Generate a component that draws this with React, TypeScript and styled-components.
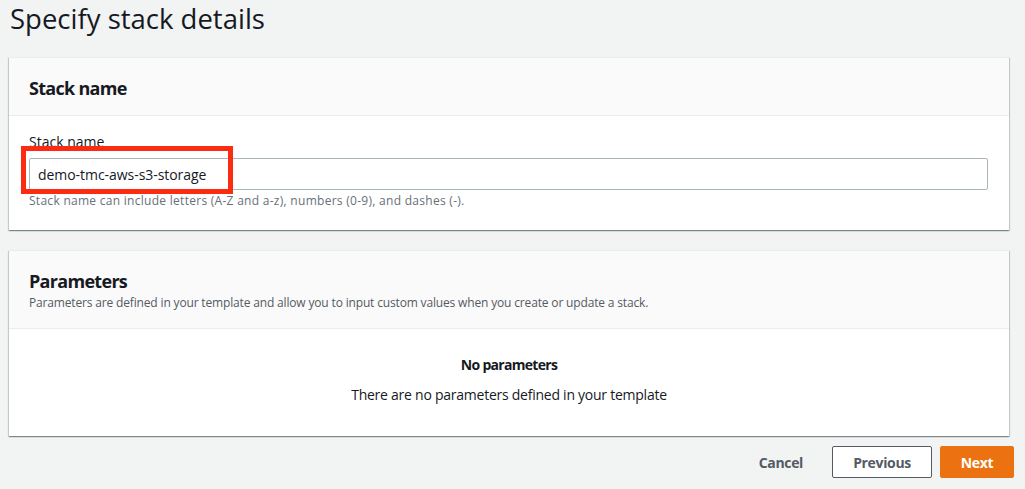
import React from "react";
import styled, { createGlobalStyle } from "styled-components";

const FONT = `"Open Sans", "Noto Sans", Arial, sans-serif`;

const Global = createGlobalStyle`
  html, body { margin: 0; padding: 0; background: #f2f3f3; }
  body { font-family: ${FONT}; color: #16191f; -webkit-font-smoothing: antialiased; }
  * { box-sizing: border-box; }
`;

const Page = styled.div`
  width: 1025px;
  height: 489px;
  padding: 0 0 0 9px;
  overflow: hidden;
`;

const Title = styled.h1`
  margin: 0;
  height: 57px;
  padding: 0 0 0 1px;
  font-size: 27.5px;
  line-height: 37px;
  font-weight: 400;
  color: #16191f;
`;

const Stack = styled.div`
  width: 1000px;
  display: flex;
  flex-direction: column;
  gap: 20px;
`;

const Card = styled.section`
  background: #fff;
  border-top: 1px solid #eaeded;
  box-shadow: 0 1px 1px 0 rgba(0, 28, 36, 0.3), 1px 1px 1px 0 rgba(0, 28, 36, 0.15),
    -1px 1px 1px 0 rgba(0, 28, 36, 0.15);
`;

const CardHeader = styled.header`
  background: #fafafa;
  border-bottom: 1px solid #eaeded;
  padding: 19px 20px 16px;
`;

const CardTitle = styled.h2`
  margin: 0;
  font-size: 18px;
  line-height: 22px;
  font-weight: 700;
  letter-spacing: -0.7px;
  color: #16191f;
`;

const CardDesc = styled.p`
  margin: 2px 0 0;
  font-size: 12px;
  line-height: 18px;
  letter-spacing: -0.16px;
  color: #545b64;
`;

const CardBody = styled.div<{ $center?: boolean }>`
  padding: ${(p) => (p.$center ? "26px 20px 31px" : "16px 20px 20px")};
  display: flex;
  flex-direction: column;
  align-items: ${(p) => (p.$center ? "center" : "stretch")};
  gap: ${(p) => (p.$center ? "10px" : "0")};
`;

const Field = styled.div`
  position: relative;
  display: flex;
  flex-direction: column;
`;

const Label = styled.label`
  font-size: 14px;
  line-height: 20px;
  color: #16191f;
  margin-bottom: 6px;
`;

const Input = styled.input`
  width: 959px;
  height: 32px;
  border: 1px solid #aab7b8;
  border-radius: 2px;
  padding: 0 8px;
  font-family: ${FONT};
  font-size: 14px;
  letter-spacing: -0.05px;
  color: #16191f;
  background: #fff;
  outline: none;
`;

const Help = styled.div`
  margin-top: 2px;
  font-size: 12px;
  line-height: 18px;
  letter-spacing: 0.28px;
  color: #687078;
`;

const Highlight = styled.div`
  position: absolute;
  left: -8px;
  top: 14px;
  width: 212px;
  height: 48px;
  border: 5px solid #fb2c12;
  pointer-events: none;
`;

const EmptyTitle = styled.div`
  font-size: 14px;
  line-height: 20px;
  font-weight: 700;
  letter-spacing: -0.7px;
  color: #16191f;
`;

const EmptyText = styled.div`
  font-size: 14px;
  line-height: 20px;
  letter-spacing: -0.25px;
  color: #16191f;
`;

const Actions = styled.div`
  width: 1005px;
  margin-top: 10px;
  display: flex;
  justify-content: flex-end;
  align-items: center;
  gap: 8px;
`;

const Button = styled.button<{ $variant: "link" | "normal" | "primary" }>`
  height: 32px;
  padding: 0 ${(p) => (p.$variant === "link" ? "20px" : "0")};
  width: ${(p) => (p.$variant === "normal" ? "100px" : p.$variant === "primary" ? "74px" : "auto")};
  flex: none;
  font-family: ${FONT};
  font-size: 14px;
  font-weight: 700;
  letter-spacing: -0.35px;
  border-radius: 2px;
  cursor: pointer;
  border: 1px solid
    ${(p) => (p.$variant === "normal" ? "#545b64" : p.$variant === "primary" ? "#ec7211" : "transparent")};
  background: ${(p) => (p.$variant === "primary" ? "#ec7211" : p.$variant === "normal" ? "#fff" : "transparent")};
  color: ${(p) => (p.$variant === "primary" ? "#fff" : "#545b64")};
`;

export default function App() {
  return (
    <>
      <Global />
      <Page>
        <Title>Specify stack details</Title>
        <Stack>
          <Card>
            <CardHeader>
              <CardTitle>Stack name</CardTitle>
            </CardHeader>
            <CardBody>
              <Field>
                <Label>Stack name</Label>
                <Input defaultValue="demo-tmc-aws-s3-storage" readOnly />
                <Highlight />
              </Field>
              <Help>Stack name can include letters (A-Z and a-z), numbers (0-9), and dashes (-).</Help>
            </CardBody>
          </Card>
          <Card>
            <CardHeader>
              <CardTitle>Parameters</CardTitle>
              <CardDesc>
                Parameters are defined in your template and allow you to input custom values when you create or
                update a stack.
              </CardDesc>
            </CardHeader>
            <CardBody $center>
              <EmptyTitle>No parameters</EmptyTitle>
              <EmptyText>There are no parameters defined in your template</EmptyText>
            </CardBody>
          </Card>
        </Stack>
        <Actions>
          <Button $variant="link">Cancel</Button>
          <Button $variant="normal">Previous</Button>
          <Button $variant="primary">Next</Button>
        </Actions>
      </Page>
    </>
  );
}
